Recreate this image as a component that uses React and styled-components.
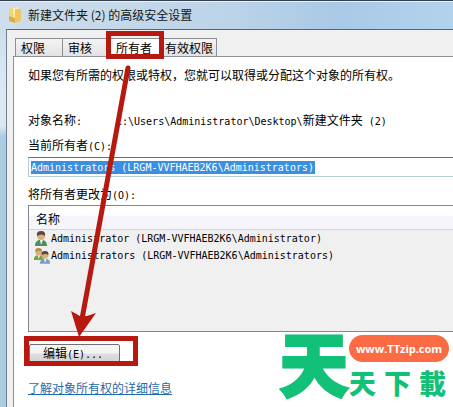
import React from "react";
import styled, { createGlobalStyle } from "styled-components";

const Global = createGlobalStyle`
  * { box-sizing: border-box; }
  html, body, #root { height: 100%; }
  body {
    margin: 0;
    overflow: hidden;
    font-family: "Noto Sans CJK SC", sans-serif;
    font-size: 12px;
    line-height: 16px;
    color: #000;
    background: #f0f0f0;
  }
`;

const Mono = styled.span`
  font-family: "DejaVu Sans Mono", "Liberation Mono", monospace;
  font-size: 10px;
  line-height: 10px;
  white-space: pre;
`;

const Window = styled.div`
  position: relative;
  display: flex;
  flex-direction: column;
  min-height: 100%;
  border-top: 1px solid #34404e;
  background: linear-gradient(#c3d8ea, #dbe8f3 80px, #dce8f2 125px, #a9cde2 135px, #a9cde2);
`;

const TitleBar = styled.header`
  display: flex;
  align-items: center;
  gap: 4px;
  height: 28px;
  padding: 0 0 2px 8px;
  border-top: 1px solid #e8f2fa;
  background: linear-gradient(90deg, #cfdeeb, #bdd3e8 50%, #a9c9e6 75%, #b2d2ee);
`;

const Title = styled.h1`
  margin: 0;
  font-size: 12px;
  font-weight: 400;
  color: #101820;
`;

const Client = styled.main`
  flex: 1;
  display: flex;
  flex-direction: column;
  margin-left: 6px;
  padding: 8px 0 0 6px;
  border-top: 1px solid #52667a;
  border-left: 1px solid #6b7f90;
  background: #f0f0f0;
`;

const Tabs = styled.div`
  display: flex;
  padding-left: 2px;
`;

const Tab = styled.button`
  height: 18px;
  width: ${(p) => p.$width}px;
  padding: 0;
  padding-left: ${(p) => p.$inset}px;
  border: 1px solid #8c8f94;
  border-bottom: 0;
  border-left-width: ${(p) => (p.$first ? 1 : 0)}px;
  background: ${(p) => (p.$active ? "#fff" : "linear-gradient(#f4f4f4, #e2e2e2)")};
  color: #000;
  font: inherit;
  text-align: left;
  white-space: nowrap;
`;

const Panel = styled.section`
  flex: 1;
  display: flex;
  flex-direction: column;
  padding: 10px 0 0 14px;
  border-top: 1px solid #8c8f94;
  border-left: 1px solid #8c8f94;
  background: #fff;
`;

const Description = styled.p`
  margin: 0 0 29px;
`;

const ObjectLine = styled.div`
  display: grid;
  grid-template-columns: 88px 1fr;
  height: 16px;
  margin-bottom: 9px;
`;

const Label = styled.label`
  display: block;
  height: 16px;
`;

const OwnerField = styled.div`
  display: flex;
  align-items: center;
  height: 20px;
  margin: 4px 0 9px;
  padding-left: 2px;
  border: 1px solid #b4ccd4;
  border-top-color: #4e7a84;
  border-right: 0;
`;

const OwnerInput = styled.input`
  width: 284px;
  height: 13px;
  padding: 0;
  border: 0;
  outline: 0;
  background: #3a8fe0;
  color: #fff;
  font: 10px/13px "DejaVu Sans Mono", "Liberation Mono", monospace;
`;

const OwnerTable = styled.table`
  width: 100%;
  height: 127px;
  margin-top: 3px;
  border: 1px solid #828790;
  border-right: 0;
  border-spacing: 0;
  background: #f0f0f0;

  th {
    height: 24px;
    padding: 2px 0 0 7px;
    border-bottom: 1px solid #d5d5d8;
    background: linear-gradient(#fff 40%, #f5f5fb 45%, #f5f5fb);
    font-weight: 400;
    text-align: left;
  }

  td {
    height: 17px;
    padding: 0 0 0 5px;
  }
`;

const Owner = styled.div`
  display: flex;
  align-items: center;
  gap: 1px;
  height: 17px;
`;

const Filler = styled.tr`
  height: 100%;
`;

const EditButton = styled.button`
  align-self: flex-start;
  width: 91px;
  height: 20px;
  margin: 12px 0 16px 1px;
  padding: 0 0 2px 13px;
  border: 1px solid #707070;
  border-radius: 2px;
  background: linear-gradient(#f4f4f4 45%, #dedede 50%, #d2d2d2);
  color: #000;
  font: inherit;
  text-align: left;
`;

const HelpLink = styled.a`
  align-self: flex-start;
  color: #1f6aa8;
  text-decoration: underline;
`;

const Highlight = styled.div`
  position: absolute;
  left: ${(p) => p.$x}px;
  top: ${(p) => p.$y}px;
  width: ${(p) => p.$w}px;
  height: ${(p) => p.$h}px;
  border: 5px solid #b5190f;
  pointer-events: none;
`;

const Arrow = styled.svg`
  position: absolute;
  left: 66px;
  top: 64px;
  pointer-events: none;
`;

const Brand = styled.aside`
  position: absolute;
  right: 4px;
  bottom: 7px;
  display: flex;
  align-items: flex-start;
  color: #13c078;
`;

const BigMark = styled.span`
  font-size: 70px;
  line-height: 70px;
  font-weight: 900;
  -webkit-text-stroke: 2px #13c078;
  stroke-linejoin: round;
`;

const BrandSide = styled.div`
  display: flex;
  flex-direction: column;
  width: 100px;
  padding-top: 8px;
`;

const Address = styled.span`
  height: 27px;
  border-radius: 14px;
  background: #fd6b45;
  color: #fff;
  font: bold 11px/27px "Open Sans", sans-serif;
  text-align: center;
`;

const SmallMarks = styled.div`
  display: flex;
  justify-content: space-between;
  padding: 4px 3px 0 0;
  font-size: 27px;
  line-height: 34px;
  font-weight: 900;
`;

const FolderIcon = () => (
  <svg width="16" height="18" viewBox="0 0 16 18" aria-hidden="true">
    <path d="M1 3l4-1 2 2v12l-6-1z" fill="#f3d478" />
    <path d="M5 2l5-1v14l-4 1z" fill="#fbeeb0" />
    <path d="M7 3h6v12l-6 2z" fill="#edc860" />
    <path d="M1 10l6 2v5l-6-2z" fill="#dcae42" />
  </svg>
);

const Person = ({ coat, hair }) => (
  <>
    <path d="M1 15q0-5 4-6h4q4 1 4 6z" fill={coat} />
    <path d="M6 9l1 5 2-5z" fill="#f4f4e8" />
    <circle cx="7" cy="5" r="4" fill="#dcae83" />
    <path d="M3 5q-1-5 4-5t4 5q-3-3-8 0z" fill={hair} />
  </>
);

const UserIcon = () => (
  <svg width="16" height="16" viewBox="0 0 16 16" aria-hidden="true">
    <Person coat="#4d8f61" hair="#5c4b3b" />
  </svg>
);

const GroupIcon = () => (
  <svg width="16" height="16" viewBox="0 0 16 16" aria-hidden="true">
    <g transform="translate(-1 0) scale(.8)"><Person coat="#73a544" hair="#b88a38" /></g>
    <g transform="translate(5 3) scale(.85)"><Person coat="#7c9cc4" hair="#594b42" /></g>
  </svg>
);

const owners = [
  { name: "Administrator (LRGM-VVFHAEB2K6\\Administrator)", Icon: UserIcon },
  { name: "Administrators (LRGM-VVFHAEB2K6\\Administrators)", Icon: GroupIcon },
];

export default function App() {
  return (
    <Window>
      <Global />
      <TitleBar>
        <FolderIcon />
        <Title>新建文件夹 (2) 的高级安全设置</Title>
      </TitleBar>
      <Client>
        <Tabs role="tablist">
          <Tab role="tab" $first $width={48} $inset={5}>权限</Tab>
          <Tab role="tab" $width={44} $inset={5}>审核</Tab>
          <Tab role="tab" $width={56} $inset={9} $active aria-selected="true">所有者</Tab>
          <Tab role="tab" $width={54} $inset={2}>有效权限</Tab>
        </Tabs>
        <Panel role="tabpanel">
          <Description>如果您有所需的权限或特权，您就可以取得或分配这个对象的所有权。</Description>
          <ObjectLine>
            <span>对象名称<Mono>:</Mono></span>
            <span><Mono>C:\Users\Administrator\Desktop\</Mono>新建文件夹<Mono> (2)</Mono></span>
          </ObjectLine>
          <Label htmlFor="owner">当前所有者<Mono>(C):</Mono></Label>
          <OwnerField>
            <OwnerInput id="owner" readOnly value="Administrators (LRGM-VVFHAEB2K6\Administrators)" />
          </OwnerField>
          <Label as="div" id="change">将所有者更改为<Mono>(O):</Mono></Label>
          <OwnerTable aria-labelledby="change">
            <thead><tr><th>名称</th></tr></thead>
            <tbody>
              {owners.map(({ name, Icon }) => (
                <tr key={name}><td><Owner><Icon /><Mono>{name}</Mono></Owner></td></tr>
              ))}
              <Filler><td /></Filler>
            </tbody>
          </OwnerTable>
          <EditButton>编辑<Mono>(E)...</Mono></EditButton>
          <HelpLink href="#help">了解对象所有权的详细信息</HelpLink>
        </Panel>
      </Client>
      <Highlight $x={106} $y={30} $w={58} $h={28} />
      <Highlight $x={24} $y={335} $w={114} $h={30} />
      <Arrow width="68" height="274" viewBox="0 0 68 274" aria-hidden="true">
        <path d="M62 3L16 254" stroke="#b5190f" strokeWidth="5" strokeLinecap="round" />
        <path d="M5 246l9 5h7l9-3-17 24z" fill="#b5190f" />
      </Arrow>
      <Brand>
        <BigMark>天</BigMark>
        <BrandSide>
          <Address>www.TTzip.com</Address>
          <SmallMarks><span>天</span><span>下</span><span>載</span></SmallMarks>
        </BrandSide>
      </Brand>
    </Window>
  );
}
